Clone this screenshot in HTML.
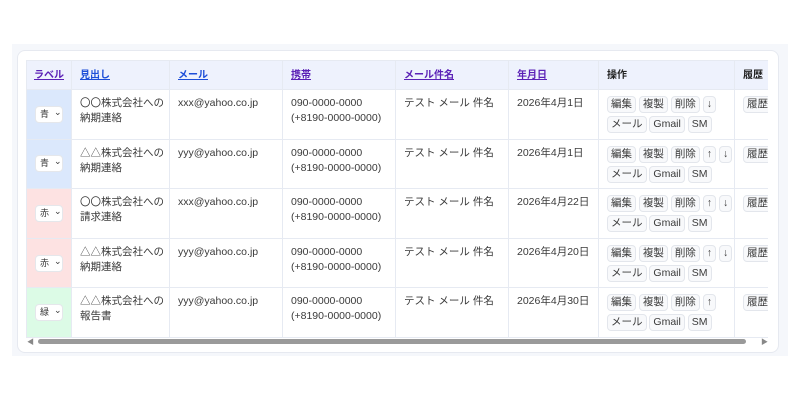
<!DOCTYPE html><html><head><meta charset="utf-8"><style>
*{box-sizing:border-box;margin:0;padding:0}
body{width:800px;height:400px;background:#fff;font-family:"Liberation Sans","Noto Sans CJK JP",sans-serif;font-size:10.5px;color:#3a3a3a;position:relative;overflow:hidden}
.panel{position:absolute;left:12px;top:44px;width:776px;height:312px;background:#f5f7fb}
.card{position:absolute;left:17px;top:50px;width:762px;height:303px;background:#fff;border:1px solid #e6e9f0;border-radius:8px}
.wrap{position:absolute;left:26px;top:60px;width:742px;height:278px;overflow:hidden}
table{border-collapse:collapse;table-layout:fixed;width:800px}
th,td{border:1px solid #e6eaf2;vertical-align:top;text-align:left;padding:0 8px;line-height:15px;white-space:nowrap;overflow:hidden}
th{height:29px;background:#eef2fd;vertical-align:middle;font-weight:bold;font-size:10px;color:#222}
th:first-child{padding:0 7px}
th a{color:#5b21b6;text-decoration:underline}
td{height:49.6px;padding-top:6px}
td.lab{vertical-align:middle;padding:0 0 0 8px}
.sel{display:inline-block;width:28px;height:17px;background:#fff;border:1px solid #e5e7eb;border-radius:4px;font-size:9px;line-height:15px;padding-left:4px}
.sel:after{content:"⌄";font-size:9px;position:relative;left:5px;top:-2px}
.b{display:inline-block;border:1px solid #e3e6ec;border-radius:4px;background:#f8f9fb;padding:0 3px;height:17px;line-height:15px;font-size:10.5px;margin:0 0 3px 0}
.ops{padding-top:6px;padding-left:8px}
.sb{position:absolute;left:38px;top:339px;width:708px;height:5px;background:#9a9a9a;border-radius:3px}
.arl{position:absolute;left:27px;top:337px;font-size:7px;color:#888}
.arr{position:absolute;left:761px;top:337px;font-size:7px;color:#888}
</style></head><body>
<div class="panel"></div><div class="card"></div>
<div class="wrap"><table>
<colgroup><col style="width:45px"><col style="width:98px"><col style="width:113px"><col style="width:113px"><col style="width:113px"><col style="width:90px"><col style="width:136px"><col style="width:92px"></colgroup>
<tr><th><a>ラベル</a></th><th><a style="color:#1d4ed8">見出し</a></th><th><a style="color:#1d4ed8">メール</a></th><th><a>携帯</a></th><th><a>メール件名</a></th><th><a>年月日</a></th><th>操作</th><th>履歴</th></tr>
<tr><td class="lab" style="background:#dbe8fc"><span class="sel">青</span></td><td>〇〇株式会社への<br>納期連絡</td><td>xxx@yahoo.co.jp</td><td>090-0000-0000<br>(+8190-0000-0000)</td><td>テスト メール 件名</td><td>2026年4月1日</td><td class="ops"><span class="b">編集</span> <span class="b">複製</span> <span class="b">削除</span> <span class="b">↓</span><br><span class="b">メール</span> <span class="b">Gmail</span> <span class="b">SM</span></td><td><span class="b">履歴</span></td></tr>
<tr><td class="lab" style="background:#dbe8fc"><span class="sel">青</span></td><td>△△株式会社への<br>納期連絡</td><td>yyy@yahoo.co.jp</td><td>090-0000-0000<br>(+8190-0000-0000)</td><td>テスト メール 件名</td><td>2026年4月1日</td><td class="ops"><span class="b">編集</span> <span class="b">複製</span> <span class="b">削除</span> <span class="b">↑</span> <span class="b">↓</span><br><span class="b">メール</span> <span class="b">Gmail</span> <span class="b">SM</span></td><td><span class="b">履歴</span></td></tr>
<tr><td class="lab" style="background:#fde2e2"><span class="sel">赤</span></td><td>〇〇株式会社への<br>請求連絡</td><td>xxx@yahoo.co.jp</td><td>090-0000-0000<br>(+8190-0000-0000)</td><td>テスト メール 件名</td><td>2026年4月22日</td><td class="ops"><span class="b">編集</span> <span class="b">複製</span> <span class="b">削除</span> <span class="b">↑</span> <span class="b">↓</span><br><span class="b">メール</span> <span class="b">Gmail</span> <span class="b">SM</span></td><td><span class="b">履歴</span></td></tr>
<tr><td class="lab" style="background:#fde2e2"><span class="sel">赤</span></td><td>△△株式会社への<br>納期連絡</td><td>yyy@yahoo.co.jp</td><td>090-0000-0000<br>(+8190-0000-0000)</td><td>テスト メール 件名</td><td>2026年4月20日</td><td class="ops"><span class="b">編集</span> <span class="b">複製</span> <span class="b">削除</span> <span class="b">↑</span> <span class="b">↓</span><br><span class="b">メール</span> <span class="b">Gmail</span> <span class="b">SM</span></td><td><span class="b">履歴</span></td></tr>
<tr><td class="lab" style="background:#dcfbe6"><span class="sel">緑</span></td><td>△△株式会社への<br>報告書</td><td>yyy@yahoo.co.jp</td><td>090-0000-0000<br>(+8190-0000-0000)</td><td>テスト メール 件名</td><td>2026年4月30日</td><td class="ops"><span class="b">編集</span> <span class="b">複製</span> <span class="b">削除</span> <span class="b">↑</span><br><span class="b">メール</span> <span class="b">Gmail</span> <span class="b">SM</span></td><td><span class="b">履歴</span></td></tr>
</table></div>
<div class="arl">◀</div><div class="sb"></div><div class="arr">▶</div>
</body></html>
